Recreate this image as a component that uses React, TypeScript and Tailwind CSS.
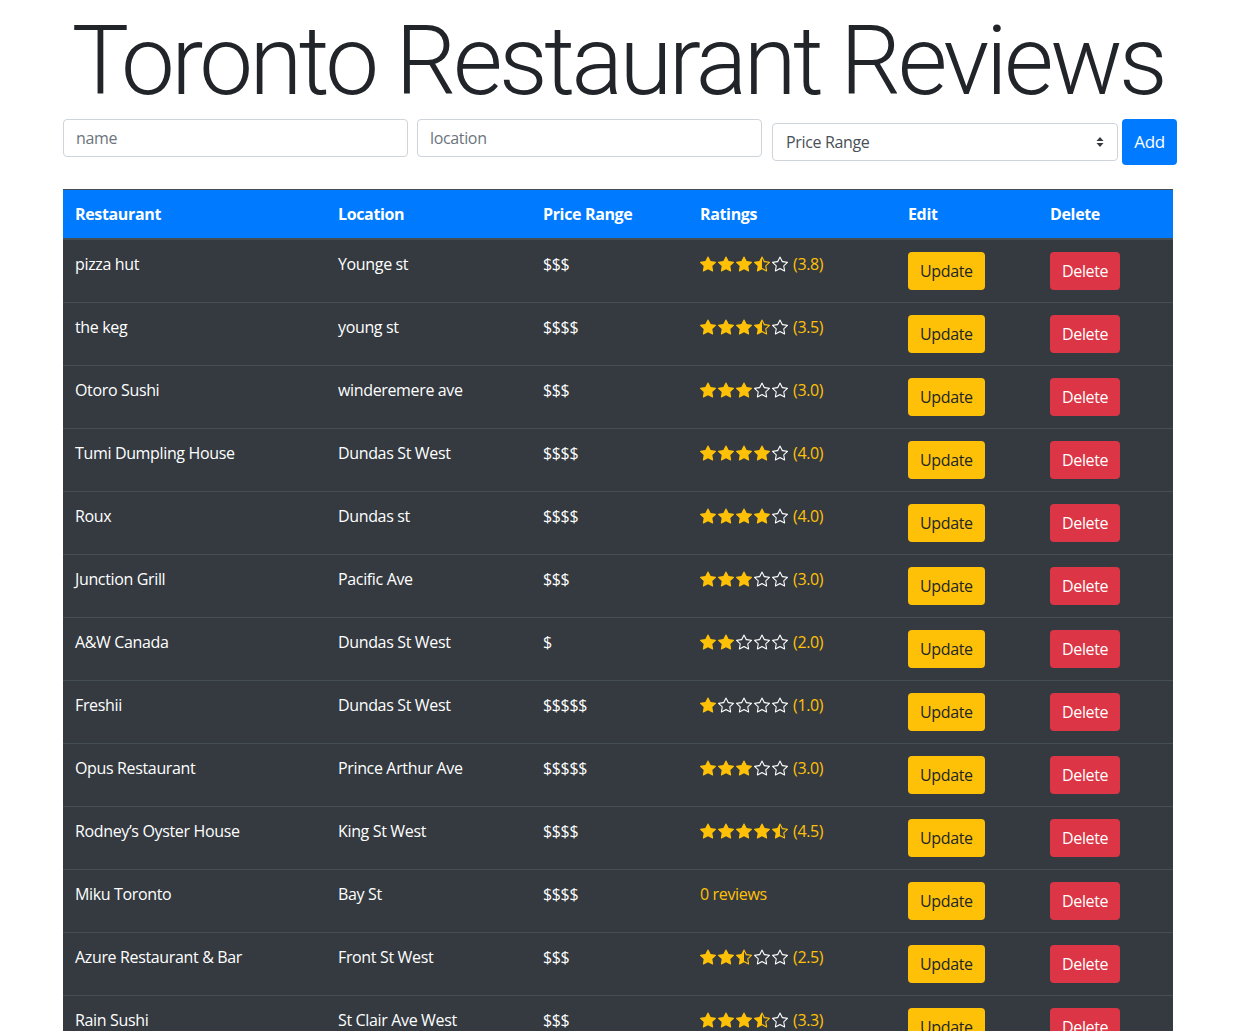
import React from "react";
import { BsStarFill, BsStarHalf, BsStar } from "react-icons/bs";

type R = { name: string; location: string; price: number; rating: number | null };

const rows: R[] = [
  { name: "pizza hut", location: "Younge st", price: 3, rating: 3.8 },
  { name: "the keg", location: "young st", price: 4, rating: 3.5 },
  { name: "Otoro Sushi", location: "winderemere ave", price: 3, rating: 3.0 },
  { name: "Tumi Dumpling House", location: "Dundas St West", price: 4, rating: 4.0 },
  { name: "Roux", location: "Dundas st", price: 4, rating: 4.0 },
  { name: "Junction Grill", location: "Pacific Ave", price: 3, rating: 3.0 },
  { name: "A&W Canada", location: "Dundas St West", price: 1, rating: 2.0 },
  { name: "Freshii", location: "Dundas St West", price: 5, rating: 1.0 },
  { name: "Opus Restaurant", location: "Prince Arthur Ave", price: 5, rating: 3.0 },
  { name: "Rodney\u2019s Oyster House", location: "King St West", price: 4, rating: 4.5 },
  { name: "Miku Toronto", location: "Bay St", price: 4, rating: null },
  { name: "Azure Restaurant & Bar", location: "Front St West", price: 3, rating: 2.5 },
  { name: "Rain Sushi", location: "St Clair Ave West", price: 3, rating: 3.3 },
];

function Stars({ rating }: { rating: number }) {
  const items = [];
  for (let i = 1; i <= 5; i++) {
    if (i <= rating) items.push(<BsStarFill key={i} className="text-[#ffc107]" size={16} />);
    else if (i === Math.ceil(rating) && !Number.isInteger(rating))
      items.push(<BsStarHalf key={i} className="text-[#ffc107]" size={16} />);
    else items.push(<BsStar key={i} className="text-white" size={16} />);
  }
  return <div className="flex items-center gap-[2px]">{items}</div>;
}

export default function App() {
  const font = { fontFamily: "'Segoe UI', 'Open Sans', 'Noto Sans', sans-serif" };
  return (
    <div className="bg-white min-h-screen text-[#212529] tracking-[-0.35px]" style={font}>
      <div className="w-[1110px] ml-[63px]">
        <h1
          className="text-center text-[96px] font-light leading-[1.2] pt-[4px] tracking-[-3.5px] whitespace-nowrap"
          style={{ fontFamily: "Roboto, 'Open Sans', sans-serif" }}
        >
          Toronto Restaurant Reviews
        </h1>
        <div className="flex items-start">
          <input
            className="shrink-0 w-[345px] h-[38px] border border-[#ced4da] rounded-[4px] px-[12px] text-[16px] text-[#495057] placeholder:text-[#6c757d] outline-none"
            placeholder="name"
          />
          <input
            className="shrink-0 w-[345px] h-[38px] ml-[9px] border border-[#ced4da] rounded-[4px] px-[12px] text-[16px] text-[#495057] placeholder:text-[#6c757d] outline-none"
            placeholder="location"
          />
          <div className="shrink-0 w-[346px] h-[38px] ml-[10px] mt-[4px] border border-[#ced4da] rounded-[4px] pl-[13px] pr-[12px] flex items-center justify-between text-[16px] text-[#495057]">
            <span>Price Range</span>
            <svg width="8" height="12" viewBox="0 0 8 12" className="mr-[1px]">
              <path d="M4 1 L7.5 5 L0.5 5 Z" fill="#343a40" />
              <path d="M4 11 L7.5 7 L0.5 7 Z" fill="#343a40" />
            </svg>
          </div>
          <button className="shrink-0 w-[55px] h-[46px] ml-[4px] bg-[#007bff] text-white rounded-[4px] text-[17px] flex items-center justify-center">
            Add
          </button>
        </div>
        <table className="w-[1110px] mt-[24px] table-fixed text-white text-[16px] leading-[24px]">
          <colgroup>
            <col className="w-[263px]" />
            <col className="w-[205px]" />
            <col className="w-[157px]" />
            <col className="w-[208px]" />
            <col className="w-[142px]" />
            <col className="w-[135px]" />
          </colgroup>
          <thead>
            <tr className="bg-[#007bff]">
              {["Restaurant", "Location", "Price Range", "Ratings", "Edit", "Delete"].map((h) => (
                <th
                  key={h}
                  className="text-left font-bold px-[12px] py-[12px] border-t border-t-[#454d55] border-b-2 border-b-[#454d55]"
                >
                  {h}
                </th>
              ))}
            </tr>
          </thead>
          <tbody>
            {rows.map((r, idx) => (
              <tr key={idx} className="bg-[#343a40] border-t border-[#454d55] align-top">
                <td className="px-[12px] py-[12px]">{r.name}</td>
                <td className="px-[12px] py-[12px]">{r.location}</td>
                <td className="px-[12px] py-[12px]">{"$".repeat(r.price)}</td>
                <td className="px-[12px] py-[12px]">
                  {r.rating === null ? (
                    <span className="text-[#ffc107]">0 reviews</span>
                  ) : (
                    <div className="flex items-center h-[24px]">
                      <Stars rating={r.rating} />
                      <span className="text-[#ffc107] ml-[5px]">({r.rating.toFixed(1)})</span>
                    </div>
                  )}
                </td>
                <td className="px-[12px] py-[12px]">
                  <button className="block bg-[#ffc107] text-[#212529] rounded-[4px] px-[12px] h-[38px]">Update</button>
                </td>
                <td className="px-[12px] py-[12px]">
                  <button className="block bg-[#dc3545] text-white rounded-[4px] px-[12px] h-[38px]">Delete</button>
                </td>
              </tr>
            ))}
          </tbody>
        </table>
      </div>
    </div>
  );
}
